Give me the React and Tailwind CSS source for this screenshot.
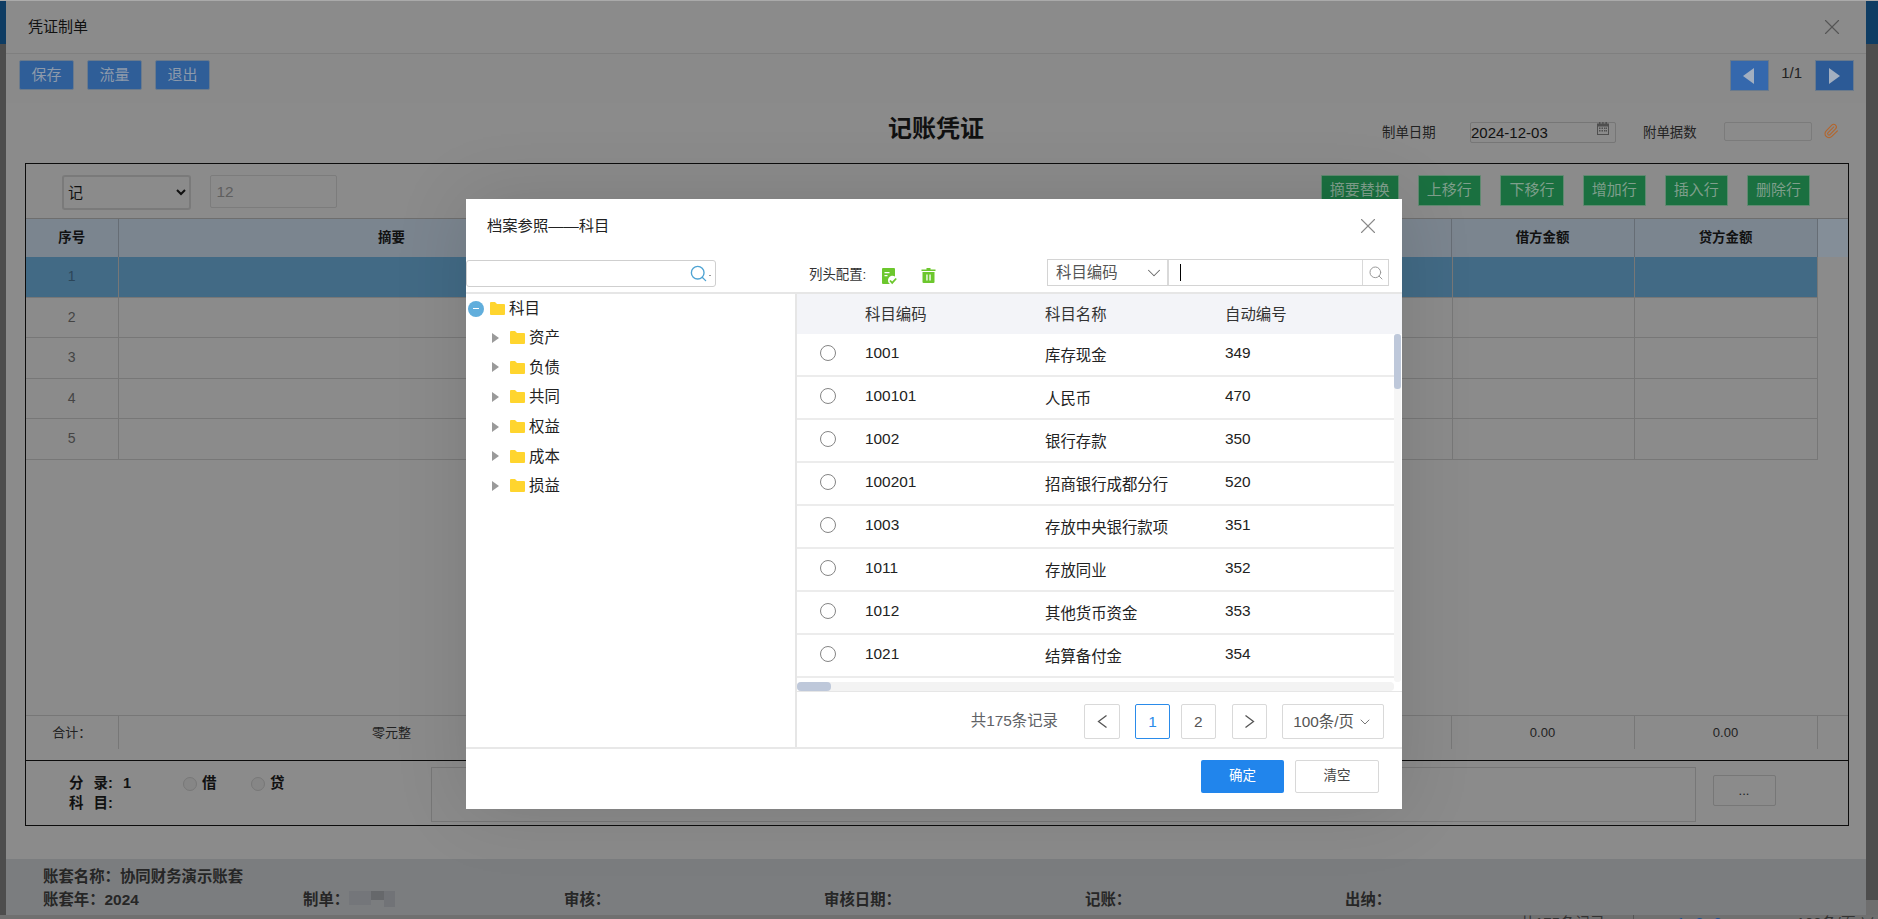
import { X, Search, Paperclip, ChevronDown } from "lucide-react";

const treeItems = ["资产", "负债", "共同", "权益", "成本", "损益"];

const accounts = [
  ["1001", "库存现金", "349"],
  ["100101", "人民币", "470"],
  ["1002", "银行存款", "350"],
  ["100201", "招商银行成都分行", "520"],
  ["1003", "存放中央银行款项", "351"],
  ["1011", "存放同业", "352"],
  ["1012", "其他货币资金", "353"],
  ["1021", "结算备付金", "354"],
];

const greenButtons = [
  ["摘要替换", "w-[77.5px]"],
  ["上移行", "w-[63.5px]"],
  ["下移行", "w-[64px]"],
  ["增加行", "w-[62.5px]"],
  ["插入行", "w-[63.5px]"],
  ["删除行", "w-[63px]"],
];

function Folder() {
  return (
    <svg width="15" height="13" viewBox="0 0 15 13" className="shrink-0">
      <path d="M0 1a1 1 0 0 1 1-1h4l2 2h7a1 1 0 0 1 1 1v9a1 1 0 0 1-1 1H1a1 1 0 0 1-1-1z" fill="#ffd52e" />
    </svg>
  );
}

function BlueButton({ children }) {
  return (
    <button className="w-[55px] h-[30px] bg-[#2f5e98] border border-[#6a7a8c] rounded-[2px] text-[15px] text-[#8d9aab]">
      {children}
    </button>
  );
}

function NavButton({ dir }) {
  return (
    <button className={`w-[39px] h-[31px] border border-[#6a7a8c] flex items-center justify-center ${dir === "left" ? "bg-[#3568ad]" : "bg-[#2c5a96]"}`}>
      <svg width="12" height="16" viewBox="0 0 12 16">
        <path d={dir === "left" ? "M11 0v16L0 8z" : "M1 0v16l11-8z"} fill="#a3afc0" />
      </svg>
    </button>
  );
}

function DocIcon() {
  return (
    <svg width="15" height="17" viewBox="0 0 15 17">
      <path d="M0 1a1 1 0 0 1 1-1h11a1 1 0 0 1 1 1v7.5a4.5 4.5 0 0 0-5 7.5H1a1 1 0 0 1-1-1z" fill="#6cc72d" />
      <path d="M2.5 4h5v1.2h-5zM2.5 7h3v1.2h-3z" fill="#fff" />
      <path d="M8 12.5l2.2 2.4 4-4.4" fill="none" stroke="#6cc72d" strokeWidth="1.8" />
    </svg>
  );
}

function TrashIcon() {
  return (
    <svg width="15" height="15" viewBox="0 0 15 15">
      <path d="M5.5 0h4v1.5h5V3H.5V1.5h5z" fill="#6cc72d" />
      <path d="M1.5 4h12v10a1 1 0 0 1-1 1h-10a1 1 0 0 1-1-1z" fill="#6cc72d" />
      <path d="M5.3 6.5h1.3v6H5.3zM8.4 6.5h1.3v6H8.4z" fill="#fff" />
    </svg>
  );
}

function CalendarIcon() {
  return (
    <svg width="12" height="13" viewBox="0 0 12 13">
      <path d="M2 0h1.4v1.5h1.8V0h1.4v1.5h1.8V0H10v1.5h2V13H0V1.5h2z" fill="#4f4f4f" />
      <path d="M1 4.5h10V12H1z" fill="#8b8b8b" />
      <path d="M2 5.5h1.5V7H2zM4.5 5.5H6V7H4.5zM7 5.5h1.5V7H7zM9 5.5h1V7H9zM2 8h1.5v1.5H2zM4.5 8H6v1.5H4.5zM7 8h1.5v1.5H7zM9 8h1v1.5H9z" fill="#4f4f4f" />
    </svg>
  );
}

function PageArrow({ dir }) {
  return (
    <svg width="11" height="13" viewBox="0 0 11 13" fill="none" stroke="#555" strokeWidth="1.3">
      <path d={dir === "left" ? "M9.5 .5L1.5 6.5l8 6" : "M1.5 .5l8 6-8 6"} />
    </svg>
  );
}

function PageBox({ className = "", children }) {
  return (
    <div className={`h-[35px] border border-[#d9d9d9] rounded-[2px] flex items-center justify-center text-[#555] ${className}`}>
      {children}
    </div>
  );
}

function ReferenceModal() {
  return (
    <div className="absolute left-[466px] top-[199px] w-[936px] h-[610px] bg-white flex flex-col shadow-[0_0_70px_rgba(0,0,0,0.12)] text-[15.4px] text-[#222]">
      {/* title */}
      <div className="h-[60px] flex items-start justify-between pl-[21px] pr-[21px] pt-[18px] shrink-0">
        <span className="text-[15.3px] leading-[18px] text-[#222]">档案参照——科目</span>
        <X className="w-[26px] h-[26px] -mt-[4px] text-[#8a8a8a]" strokeWidth={1} />
      </div>

      {/* search bar */}
      <div className="h-[35px] shrink-0 flex items-start border-b-2 border-[#e6e6e6]">
        <div className="w-[250px] h-[27px] mt-[1px] border border-[#cfcfcf] rounded-[3px] flex items-center justify-end pr-[4px]">
          <Search className="w-[19px] h-[19px] text-[#4ea3d3]" strokeWidth={1.7} />
          <span className="ml-px mt-[3px] w-[2px] h-px bg-[#999]" />
        </div>
        <span className="ml-[93px] mt-[7px] text-[13.4px] leading-[18px] text-[#333] w-[58px] whitespace-nowrap">列头配置:</span>
        <span className="ml-[15px] mt-[9px]"><DocIcon /></span>
        <span className="ml-[24px] mt-[9px]"><TrashIcon /></span>
        <div className="ml-[111px] w-[342px] h-[27px] border border-[#d4d4d4] flex items-stretch">
          <div className="w-[121px] flex items-center justify-between pl-[8px] pr-[2px] border-r-2 border-[#d9d9d9] text-[#555]">
            <span className="mt-px">科目编码</span>
            <ChevronDown className="w-[22px] h-[22px] text-[#666]" strokeWidth={1.1} />
          </div>
          <div className="flex-1 flex items-center pl-[11px]">
            <div className="w-px h-[17px] bg-black" />
          </div>
          <div className="w-[26px] border-l border-[#d9d9d9] flex items-center justify-center">
            <Search className="w-[16px] h-[16px] text-[#999]" strokeWidth={1.5} />
          </div>
        </div>
      </div>

      {/* body */}
      <div className="flex-1 flex min-h-0">
        <div className="w-[331px] border-r-2 border-[#e6e6e6] shrink-0">
          <div className="h-[29px] flex items-center pl-[2px]">
            <span className="w-[16px] h-[16px] rounded-full bg-[#61aedc] flex items-center justify-center">
              <span className="w-[6px] h-[1.5px] bg-white" />
            </span>
            <span className="ml-[6px]"><Folder /></span>
            <span className="ml-[4px]">科目</span>
          </div>
          {treeItems.map((name) => (
            <div key={name} className="h-[29.6px] flex items-center pl-[26px]">
              <svg width="7" height="10" viewBox="0 0 7 10" className="shrink-0">
                <path d="M0 0l7 5-7 5z" fill="#9a9a9a" />
              </svg>
              <span className="ml-[11px]"><Folder /></span>
              <span className="ml-[4px]">{name}</span>
            </div>
          ))}
        </div>

        <div className="flex-1 flex flex-col min-w-0">
          <div className="h-[40px] shrink-0 bg-[#f3f4f8] grid grid-cols-[68px_180px_180px_1fr] items-center text-[#333] pt-px">
            <span />
            <span>科目编码</span>
            <span>科目名称</span>
            <span>自动编号</span>
          </div>
          <div className="h-[348px] shrink-0 flex">
            <div className="flex-1">
              {accounts.map(([code, name, no]) => (
                <div key={code} className="h-[43px] grid grid-cols-[68px_180px_180px_1fr] items-center border-b-2 border-[#ececec]">
                  <span className="ml-[23px] w-[16px] h-[16px] rounded-full border border-[#858585] -mt-[4px]" />
                  <span className="-mt-[3px]">{code}</span>
                  <span className="mt-[3px]">{name}</span>
                  <span className="-mt-[3px]">{no}</span>
                </div>
              ))}
            </div>
            <div className="w-[7px] mr-px bg-[#f6f6f6] rounded-[3px]">
              <div className="h-[55px] bg-[#bec8da] rounded-[3px]" />
            </div>
          </div>
          <div className="h-[9px] shrink-0 mr-[8px] bg-[#f3f3f3] rounded-[4px]">
            <div className="w-[34px] h-full bg-[#bec8da] rounded-[4px]" />
          </div>
          <div className="flex-1 border-t border-[#e6e6e6] flex items-start justify-end pt-[12px] pr-[18px]">
            <span className="mt-[5px] mr-[26px] text-[#606266] whitespace-nowrap">共175条记录</span>
            <PageBox className="w-[36px]"><PageArrow dir="left" /></PageBox>
            <PageBox className="w-[35px] ml-[15px] !border-[#2a8bea] !text-[#2a8bea]">1</PageBox>
            <PageBox className="w-[34.5px] ml-[11px]">2</PageBox>
            <PageBox className="w-[35px] ml-[16.5px]"><PageArrow dir="right" /></PageBox>
            <PageBox className="w-[102px] ml-[15px] gap-[3px] whitespace-nowrap">
              100条/页
              <ChevronDown className="w-[16px] h-[16px]" strokeWidth={1.2} />
            </PageBox>
          </div>
        </div>
      </div>

      {/* footer */}
      <div className="h-[62px] shrink-0 border-t-2 border-[#e8e8e8] flex items-start justify-end gap-[11px] pt-[11px] pr-[23px]">
        <button className="w-[83px] h-[33px] bg-[#2185ec] rounded-[2px] text-white text-[13.5px]">确定</button>
        <button className="w-[84px] h-[33px] border border-[#d8d8d8] rounded-[2px] text-[#444] text-[13.5px]">清空</button>
      </div>
    </div>
  );
}

export default function App() {
  return (
    <div className="relative w-[1878px] h-[919px] overflow-hidden bg-[#4d4d4d] flex flex-col font-['Liberation_Sans','Noto_Sans_CJK_SC',sans-serif]">
      <div className="h-px bg-[#aaaaaa] shrink-0" />
      <div className="h-[914px] flex shrink-0">
        <div className="w-[6px] shrink-0">
          <div className="h-[43px] bg-[#0e3c63]" />
        </div>

        {/* voucher window */}
        <div className="w-[1860px] shrink-0 bg-[#8b8b8b] flex flex-col">
          <div className="h-[53px] shrink-0 border-b border-[#7f7f7f] flex items-center justify-between pl-[22px] pr-[21px]">
            <span className="text-[15px] text-[#111]">凭证制单</span>
            <X className="w-[26px] h-[26px] text-[#555]" strokeWidth={1} />
          </div>

          <div className="h-[49px] shrink-0 bg-[#8a8a8a] flex items-start justify-between pt-[6px] pl-[13px] pr-[12.5px]">
            <div className="flex gap-[13px]">
              <BlueButton>保存</BlueButton>
              <BlueButton>流量</BlueButton>
              <BlueButton>退出</BlueButton>
            </div>
            <div className="flex items-start">
              <NavButton dir="left" />
              <span className="mx-[12.5px] mt-[2px] text-[15px] text-[#222]">1/1</span>
              <NavButton dir="right" />
            </div>
          </div>

          <div className="h-[60px] shrink-0 grid grid-cols-[1fr_auto_1fr]">
            <span />
            <span className="text-[24px] leading-[30px] mt-[11px] font-bold text-[#111]">记账凭证</span>
            <div className="flex items-start justify-end pr-[27px] text-[13.4px] text-[#222]">
              <span className="mt-[20px] w-[53px] whitespace-nowrap">制单日期</span>
              <div className="ml-[35px] mt-[19px] w-[146px] h-[20.5px] border border-[#767676] rounded-[2px] flex items-start justify-between pr-[6px] text-[15px] leading-[20px] text-[#111]">
                <span>2024-12-03</span>
                <span className="-mt-px"><CalendarIcon /></span>
              </div>
              <span className="ml-[27px] mt-[20px] w-[53px] whitespace-nowrap">附单据数</span>
              <div className="ml-[28px] mt-[19px] w-[88px] h-[18.5px] border border-[#7b7b7b] rounded-[2px]" />
              <Paperclip className="ml-[11px] mt-[20px] w-[16px] h-[16px] text-[#b5652b]" strokeWidth={1.6} />
            </div>
          </div>

          {/* voucher box */}
          <div className="ml-[19px] w-[1824px] h-[663px] shrink-0 border border-[#0c0c0c] flex flex-col">
            <div className="flex-1 flex flex-col min-h-0">
              <div className="h-[54px] shrink-0 flex items-start pt-[11px]">
                <select defaultValue="记" className="ml-[36px] w-[129px] h-[35px] border-2 border-[#7a7a7a] rounded-[3px] bg-[#8b8b8b] text-[15px] text-[#111]">
                  <option>记</option>
                </select>
                <input readOnly value="12" className="ml-[18.5px] w-[127px] h-[33px] border border-[#7c7c7c] rounded-[2px] bg-[#8b8b8b] pl-[6px] text-[15.4px] text-[#5f5f5f]" />
                <div className="ml-auto mr-[38px] flex gap-[19px]">
                  {greenButtons.map(([label, w]) => (
                    <button key={label} className={`${w} h-[31px] bg-[#1a7040] border border-[#5f8a70] rounded-[1px] text-[15px] text-[#7f9f8c] whitespace-nowrap`}>
                      {label}
                    </button>
                  ))}
                </div>
              </div>

              <div className="h-[39px] shrink-0 bg-[#7b858f] border-t border-[#6e6e6e] flex font-bold text-[13.4px] text-[#111]">
                <div className="w-[92.5px] border-r border-[#666d75] flex items-center justify-center">序号</div>
                <div className="w-[546px] flex items-center justify-center">摘要</div>
                <div className="w-[787px] border-r border-[#666d75]" />
                <div className="w-[183px] border-r border-[#666d75] flex items-center justify-center">借方金额</div>
                <div className="w-[183px] border-r border-[#666d75] flex items-center justify-center">贷方金额</div>
                <div className="flex-1 bg-[#848e98]" />
              </div>

              {["1", "2", "3", "4", "5"].map((n) => (
                <div key={n} className={`h-[40.5px] shrink-0 w-[1791.5px] flex border-b border-[#777777] text-[14px] ${n === "1" ? "bg-[#426a85] text-[#2c4659]" : "text-[#444]"}`}>
                  <div className="w-[92.5px] border-r border-[#777777] flex items-center justify-center">{n}</div>
                  <div className="w-[1333px]" />
                  <div className="w-[183px] border-x border-[#777777]" />
                  <div className="w-[183px] border-r border-[#777777]" />
                </div>
              ))}
              <div className="flex-1" />

              <div className="h-[45px] shrink-0 border-t border-[#777777] text-[13px] text-[#222]">
                <div className="h-[33px] flex">
                  <div className="w-[92.5px] border-r border-[#777777] flex items-center justify-center">合计：</div>
                  <div className="w-[546px] flex items-center justify-center">零元整</div>
                  <div className="w-[787px] border-r border-[#777777]" />
                  <div className="w-[183px] border-r border-[#777777] flex items-center justify-center">0.00</div>
                  <div className="w-[183px] border-r border-[#777777] flex items-center justify-center">0.00</div>
                </div>
              </div>
            </div>

            <div className="h-[65px] shrink-0 border-t border-[#0c0c0c] flex items-start text-[14.5px] font-bold text-[#111]">
              <div className="w-[404.5px] shrink-0 pt-[13px] pl-[43px]">
                <div className="h-[20px] flex items-center">
                  <span className="w-[114px] whitespace-pre [word-spacing:6px]">分 录: 1</span>
                  <span className="w-[14px] h-[14px] rounded-full border border-[#787878] bg-[#868686]" />
                  <span className="ml-[5px] w-[49px]">借</span>
                  <span className="w-[14px] h-[14px] rounded-full border border-[#787878] bg-[#868686]" />
                  <span className="ml-[5px]">贷</span>
                </div>
                <div className="h-[20px] flex items-center whitespace-pre [word-spacing:6px]">科 目:</div>
              </div>
              <div className="mt-[6px] w-[1265px] h-[54.5px] border border-[#777777]" />
              <button className="ml-[17px] mt-[14px] w-[63px] h-[31px] border border-[#777777] rounded-[2px] font-normal text-[13px] text-[#222]">...</button>
            </div>
          </div>

          <div className="h-[33px] shrink-0" />

          <div className="h-[56px] shrink-0 bg-[#7b7d7f] pt-[8px] pl-[37px] text-[15.4px] font-bold text-[#262626]">
            <div className="h-[20px] leading-[20px]">账套名称：协同财务演示账套</div>
            <div className="mt-[3px] h-[20px] leading-[20px] grid grid-cols-[260px_261px_260px_261px_260px_auto]">
              <span>账套年：2024</span>
              <span className="flex items-start">
                制单：
                <span className="mt-px flex h-[18px]">
                  <span className="w-[22px] h-[14px] bg-[#74767a]" />
                  <span className="w-[13px] h-[9px] bg-[#66686b]" />
                  <span className="w-[11px] h-[16px] bg-[#717377]" />
                </span>
              </span>
              <span>审核：</span>
              <span>审核日期：</span>
              <span>记账：</span>
              <span>出纳：</span>
            </div>
          </div>
        </div>

        <div className="w-[12px] shrink-0 flex flex-col justify-between">
          <div className="h-[43px] bg-[#0e3c63]" />
          <div className="h-[15px] bg-[#6e6e6e]" />
        </div>
      </div>

      {/* page underneath, only its pager shows below the window */}
      <div className="h-[4px] shrink-0 overflow-hidden bg-[#707070] flex pl-[1520px] text-[15px] leading-[15px] text-[#333]">
        <span className="whitespace-nowrap">共175条记录</span>
        <span className="ml-[28px] w-px h-full bg-[#555]" />
        <span className="ml-[14px]">&lt;</span>
        <span className="ml-[20px] text-[#1e4f8f]">1</span>
        <span className="ml-[10px] text-[#1e4f8f]">2</span>
        <span className="ml-[10px] text-[#1e4f8f]">3</span>
        <span className="ml-[28px]">&gt;</span>
        <span className="ml-[38px] whitespace-nowrap">100条/页 ∨</span>
      </div>

      <ReferenceModal />
    </div>
  );
}
